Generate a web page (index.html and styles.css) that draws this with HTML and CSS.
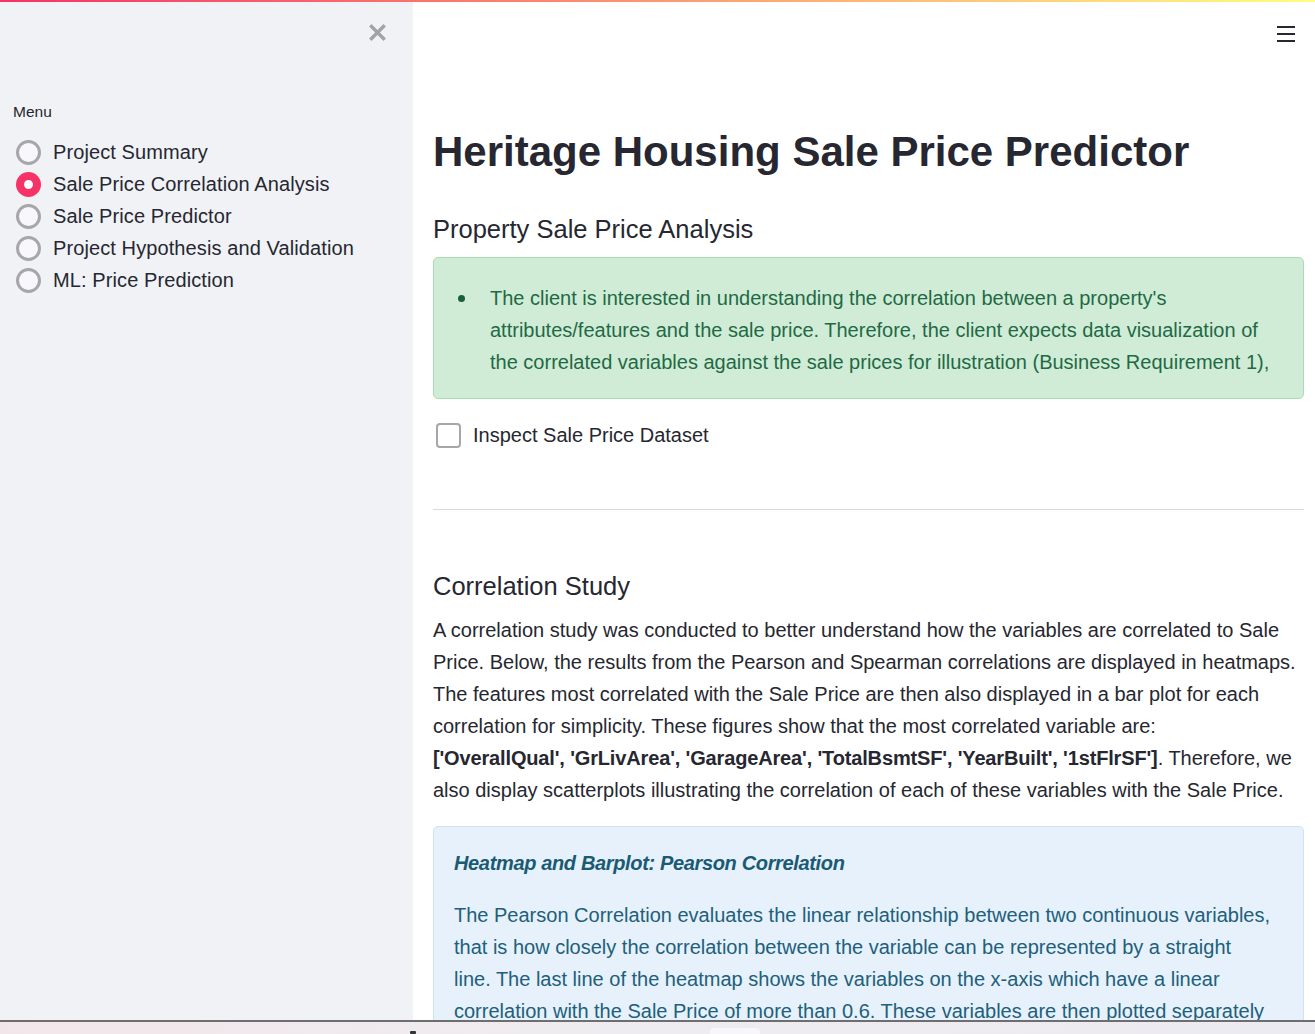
FILE: index.html
```html
<!DOCTYPE html>
<html lang="en">
<head>
<meta charset="utf-8">
<title>Heritage Housing Sale Price Predictor</title>
<link rel="stylesheet" href="styles.css">
</head>
<body>
<div class="decoration"></div>
<div class="app">
  <aside class="sidebar">
    <div class="sb-top">
      <button class="close" aria-label="Close sidebar">
        <svg width="17" height="17" viewBox="0 0 17 17"><path d="M2.5 2.5 L14.5 14.5 M14.5 2.5 L2.5 14.5" stroke="#a3a3a6" stroke-width="3.4" stroke-linecap="square"/></svg>
      </button>
    </div>
    <div class="menu-label">Menu</div>
    <div class="radio-group">
      <label class="radio"><span class="dot"></span><span class="rlabel">Project Summary</span></label>
      <label class="radio checked"><span class="dot"></span><span class="rlabel">Sale Price Correlation Analysis</span></label>
      <label class="radio"><span class="dot"></span><span class="rlabel">Sale Price Predictor</span></label>
      <label class="radio"><span class="dot"></span><span class="rlabel">Project Hypothesis and Validation</span></label>
      <label class="radio"><span class="dot"></span><span class="rlabel">ML: Price Prediction</span></label>
    </div>
  </aside>
  <main class="main">
    <header class="topbar">
      <button class="hamburger" aria-label="Menu"><span></span><span></span><span></span></button>
    </header>
    <div class="block">
      <h1 class="title">Heritage Housing Sale Price Predictor</h1>
      <h3 class="subhead first">Property Sale Price Analysis</h3>
      <div class="alert success">
        <ul>
          <li><span>The client is interested in understanding the correlation between a property's<br>attributes/features and the sale price. Therefore, the client expects data visualization of<br>the correlated variables against the sale prices for illustration (Business Requirement 1),</span></li>
        </ul>
      </div>
      <label class="checkbox"><span class="box"></span><span class="clabel">Inspect Sale Price Dataset</span></label>
      <hr class="divider">
      <h3 class="subhead second">Correlation Study</h3>
      <p class="para">A correlation study was conducted to better understand how the variables are correlated to Sale<br>Price. Below, the results from the Pearson and Spearman correlations are displayed in heatmaps.<br>The features most correlated with the Sale Price are then also displayed in a bar plot for each<br>correlation for simplicity. These figures show that the most correlated variable are:<br><strong>['OverallQual', 'GrLivArea', 'GarageArea', 'TotalBsmtSF', 'YearBuilt', '1stFlrSF']</strong>. Therefore, we<br>also display scatterplots illustrating the correlation of each of these variables with the Sale Price.</p>
      <div class="alert info">
        <p class="info-head">Heatmap and Barplot: Pearson Correlation</p>
        <p class="info-body">The Pearson Correlation evaluates the linear relationship between two continuous variables,<br>that is how closely the correlation between the variable can be represented by a straight<br>line. The last line of the heatmap shows the variables on the x-axis which have a linear<br>correlation with the Sale Price of more than 0.6. These variables are then plotted separately</p>
      </div>
    </div>
  </main>
</div>
<div class="taskbar"><span class="tb-mark"></span><span class="tb-pill"></span></div>
</body>
</html>
```

FILE: styles.css
```css
* { box-sizing: border-box; }
html, body { margin: 0; padding: 0; height: 100%; }
body {
  font-family: "Liberation Sans", Arial, sans-serif;
  color: #262730;
  background: #ffffff;
  overflow: hidden;
}
.decoration {
  position: fixed;
  top: 0; left: 0; right: 0;
  height: 2px;
  background: linear-gradient(90deg, #f63366, #fffd80);
  z-index: 10;
}
.app {
  display: flex;
  height: 100vh;
}
.sidebar {
  flex: 0 0 413px;
  background: #f0f2f6;
  padding: 0 0 0 13px;
}
.sb-top {
  display: flex;
  justify-content: flex-end;
  padding: 24px 27px 0 0;
}
.close {
  border: 0; background: none; padding: 0; margin: 0;
  width: 17px; height: 17px; display: block;
}
.close svg { display: block; }
.menu-label {
  margin-top: 61px;
  font-size: 15.5px;
  line-height: 20px;
  color: #262730;
}
.radio-group {
  margin-top: 14px;
  display: flex;
  flex-direction: column;
}
.radio {
  display: flex;
  align-items: center;
  height: 32px;
  font-size: 20px;
  letter-spacing: 0.1px;
  color: #262730;
}
.dot {
  width: 25px; height: 25px;
  margin-left: 3px;
  margin-right: 12px;
  border-radius: 50%;
  border: 3px solid #a6a6ab;
  background: #f8f8fa;
  flex: none;
}
.radio.checked .dot {
  border: 8px solid #f63366;
  background: #ffffff;
}
.main {
  flex: 1;
  padding: 0 11px 0 20px;
  min-width: 0;
}
.topbar {
  display: flex;
  justify-content: flex-end;
  padding: 26px 9px 0 0;
}
.hamburger {
  border: 0; background: none; padding: 0; margin: 0;
  width: 18px; height: 16px;
  display: flex; flex-direction: column; justify-content: space-between;
}
.hamburger span {
  display: block; height: 2px; width: 18px; background: #262730;
}
.title {
  margin: 80px 0 0;
  font-size: 42px;
  line-height: 60px;
  font-weight: 700;
  color: #262730;
}
.subhead {
  margin: 0;
  font-size: 25.5px;
  line-height: 36px;
  font-weight: 400;
  color: #262730;
}
.subhead.first { margin-top: 29px; }
.alert {
  border-radius: 5px;
  font-size: 20px;
  line-height: 32px;
}
.alert.success {
  margin-top: 10px;
  background: #d1ecd6;
  border: 1px solid #a9dcb4;
  color: #1e6a45;
  padding: 24px 20px 20px;
}
.alert.success ul {
  margin: 0;
  padding: 0;
  list-style: none;
}
.alert.success li {
  display: grid;
  grid-template-columns: 36px 1fr;
}
.alert.success li::before {
  content: "";
  width: 7px;
  height: 7px;
  border-radius: 50%;
  background: #17603c;
  margin: 13px 0 0 4px;
}
.checkbox {
  display: flex;
  align-items: center;
  height: 32px;
  margin-top: 20px;
  font-size: 20px;
}
.box {
  width: 25px; height: 25px;
  margin-left: 3px;
  margin-right: 12px;
  border: 2px solid #a6a6ab;
  border-radius: 4px;
  background: #ffffff;
}
.divider {
  margin: 58px 0 0;
  border: 0;
  border-top: 1px solid #d9d9de;
}
.subhead.second { margin-top: 58px; }
.para {
  margin: 10px 0 0;
  font-size: 20px;
  line-height: 32px;
  white-space: nowrap;
}
.para strong {
  font-weight: 700;
  letter-spacing: -0.15px;
}
.alert.info {
  margin-top: 20px;
  background: #e6f1fb;
  border: 1px solid #cfe3f5;
  color: #215f7a;
  padding: 20px 20px 20px;
}
.info-head {
  margin: 0;
  font-weight: 700;
  font-style: italic;
  letter-spacing: -0.35px;
  color: #1b5a73;
}
.info-body {
  margin: 20px 0 0;
  white-space: nowrap;
}
.taskbar {
  position: fixed;
  left: 0; right: 0; bottom: 0;
  height: 14px;
  border-top: 2px solid #6e6e70;
  background: linear-gradient(90deg, #f3e6ea, #efecf0 40%, #ecebf1);
  z-index: 10;
}
.tb-mark {
  position: absolute;
  left: 410px; top: 9px;
  width: 6px; height: 3px;
  background: #333;
  border-radius: 1px;
}
.tb-pill {
  position: absolute;
  left: 710px; top: 6px;
  width: 50px; height: 10px;
  background: #f7f7f9;
  border-radius: 4px;
}
```
